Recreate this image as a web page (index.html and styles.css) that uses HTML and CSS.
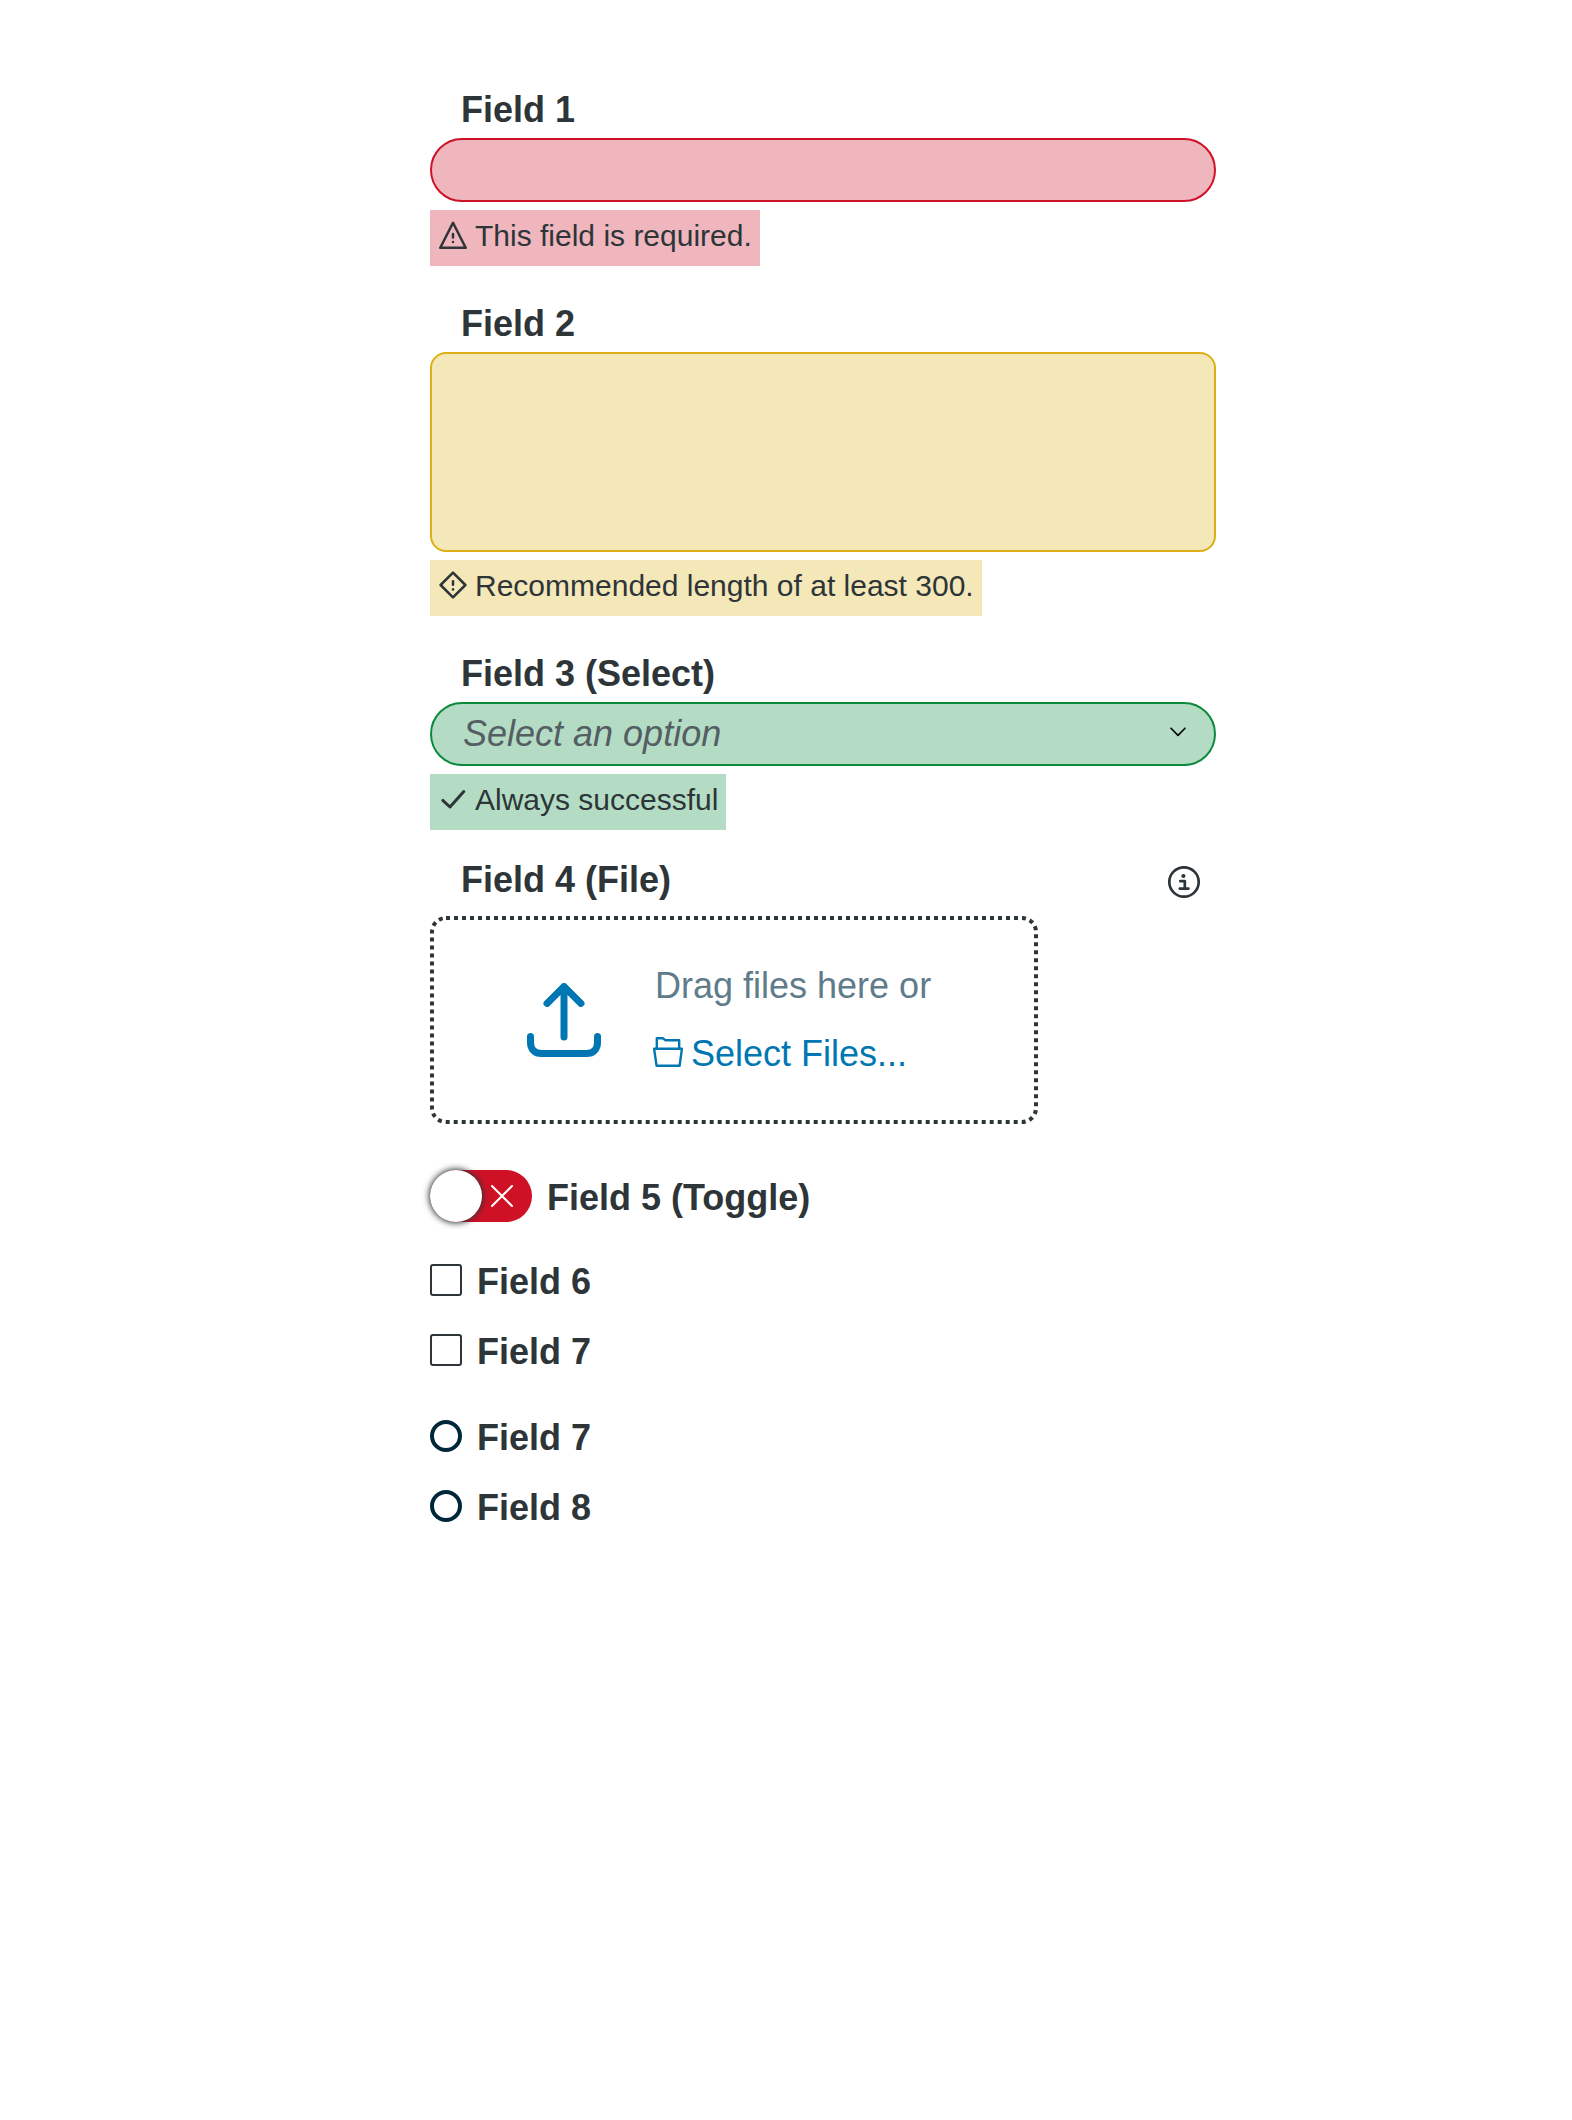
FILE: index.html
```html
<!DOCTYPE html>
<html lang="en">
<head>
<meta charset="utf-8">
<title>Form fields</title>
<link rel="stylesheet" href="styles.css">
</head>
<body>
<form class="form">
  <div class="field">
    <div class="label">Field 1</div>
    <div class="input error"></div>
    <div class="message error-bg">
      <svg class="message-icon" viewBox="0 0 28 28"><path d="M14 1.8 1.3 26.8H26.7Z"/><path d="M14 12.900v3.500M14 20.900v.2"/></svg>
      <span>This field is required.</span>
    </div>
  </div>
  <div class="field">
    <div class="label">Field 2</div>
    <div class="textarea"></div>
    <div class="message warning-bg">
      <svg class="message-icon" viewBox="0 0 28 28"><path d="M14 1.6 26.4 14 14 26.4 1.6 14Z"/><path d="M14 10.200v3.600M14 18.200v.2"/></svg>
      <span>Recommended length of at least 300.</span>
    </div>
  </div>
  <div class="field field-select">
    <div class="label">Field 3 (Select)</div>
    <div class="input success">
      <span class="placeholder">Select an option</span>
      <svg class="chevron" viewBox="0 0 16 10"><path d="M1 1.2 8 8.4 15 1.2"/></svg>
    </div>
    <div class="message success-bg">
      <svg class="message-icon" viewBox="0 0 28 28"><path class="tick" d="M3.8 15.4 11 22 24.800 6.5"/></svg>
      <span>Always successful</span>
    </div>
  </div>
  <div class="field field-file">
    <div class="label-row">
      <div class="label">Field 4 (File)</div>
      <svg class="info" viewBox="0 0 32 32"><circle cx="16" cy="16" r="14.7"/><path d="M12.3 15.2h4.5v7.6M11.8 22.7h8.600"/><circle class="dot" cx="15.4" cy="10" r="2.1"/></svg>
    </div>
    <div class="dropzone">
      <svg class="outline" viewBox="0 0 608 208"><rect x="2" y="2" width="604" height="204" rx="14"/></svg>
      <svg class="upload" viewBox="0 0 74 74"><path d="M37 54V3.6M20 20.4 37 3.6l17 16.8M3.5 53.5v6c0 7 4.5 11 11 11h45c6.500 0 11-4 11-11v-6"/></svg>
      <div class="drop-copy">
        <div class="drag-text">Drag files here or</div>
        <div class="browse">
          <svg class="folder" viewBox="0 0 30 30"><path d="M3.800 11V1.200H9.800L12.200 3.200H26.200V11"/><path d="M1.100 11.800H28.900L26.600 28.800H3.600Z"/></svg>
          <span>Select Files...</span>
        </div>
      </div>
    </div>
  </div>
  <div class="choice choice-toggle">
    <div class="toggle">
      <div class="thumb"></div>
      <svg class="cross" viewBox="0 0 22 22"><path d="M1 1 21 21M21 1 1 21"/></svg>
    </div>
    <span>Field 5 (Toggle)</span>
  </div>
  <div class="choices">
    <div class="choice"><div class="checkbox"></div><span>Field 6</span></div>
    <div class="choice"><div class="checkbox"></div><span>Field 7</span></div>
  </div>
  <div class="choices">
    <div class="choice"><div class="radio"></div><span>Field 7</span></div>
    <div class="choice"><div class="radio"></div><span>Field 8</span></div>
  </div>
</form>
</body>
</html>
```
FILE: styles.css
```css
* {
  box-sizing: border-box;
}

body {
  margin: 0;
  min-height: 2120px;
  background: #fff;
  color: #2d3538;
  font: 36px/48px "Liberation Sans", Arial, sans-serif;
}

svg {
  display: block;
  flex: none;
  fill: none;
  stroke-linecap: round;
  stroke-linejoin: round;
}

.form {
  width: 786px;
  margin-left: 430px;
  padding-top: 86px;
}

.field {
  display: flex;
  flex-direction: column;
  align-items: flex-start;
  margin-bottom: 34px;
}

.field-select {
  margin-bottom: 26px;
}

.label {
  padding-left: 31px;
  margin-bottom: 4px;
  font-weight: 700;
}

.input {
  display: flex;
  align-items: center;
  justify-content: space-between;
  width: 100%;
  height: 64px;
  padding: 0 28px 0 31px;
  border: 2px solid;
  border-radius: 32px;
}

.error {
  border-color: #cf1126;
  background: #f0b6bd;
}

.success {
  border-color: #0b8a3c;
  background: #b4dcc5;
}

.textarea {
  width: 100%;
  height: 200px;
  border: 2px solid #dbb016;
  border-radius: 16px;
  background: #f4e7b8;
}

.placeholder {
  color: #545e63;
  font-style: italic;
}

.chevron {
  width: 16px;
  height: 10px;
  margin-top: -4px;
  stroke: #000;
  stroke-width: 1.6;
}

.message {
  display: flex;
  gap: 8px;
  height: 56px;
  margin-top: 8px;
  padding: 6px 8px 0 9px;
  font-size: 30px;
  line-height: 40px;
}

.error-bg {
  background: #f0b6bd;
}

.warning-bg {
  background: #f4e7b8;
}

.success-bg {
  background: #b4dcc5;
}

.message-icon {
  width: 28px;
  height: 28px;
  margin-top: 5px;
  stroke: #2d3538;
  stroke-width: 2.5;
}

.tick {
  stroke-width: 3;
}

.label-row {
  display: flex;
  justify-content: space-between;
  width: 100%;
  padding-right: 16px;
}

.info {
  width: 32px;
  height: 32px;
  margin-top: 10px;
  stroke: #2d3538;
  stroke-width: 2.7;
}

.dot {
  fill: #2d3538;
  stroke: none;
}

.dropzone {
  position: relative;
  display: flex;
  gap: 52px;
  width: 608px;
  height: 208px;
  margin-top: 8px;
  padding: 46px 0 0 97px;
}

.outline {
  position: absolute;
  inset: 0;
  stroke: #2d3538;
  stroke-width: 4;
  stroke-linecap: butt;
  stroke-dasharray: 4 4;
}

.upload {
  width: 74px;
  height: 74px;
  margin-top: 21px;
  stroke: #0077b3;
  stroke-width: 7;
}

.drop-copy {
  display: flex;
  flex-direction: column;
  gap: 20px;
}

.drag-text {
  padding-left: 2px;
  color: #607c8a;
}

.browse {
  display: flex;
  gap: 8px;
  color: #0077b3;
}

.folder {
  width: 30px;
  height: 30px;
  margin-top: 7px;
  stroke: #0077b3;
  stroke-width: 2.4;
}

.choice {
  display: flex;
  align-items: flex-start;
  gap: 15px;
  height: 70px;
  font-weight: 700;
}

.choice-toggle {
  height: 88px;
  margin-top: 46px;
}

.choice-toggle > span {
  margin-top: 4px;
}

.toggle {
  display: flex;
  align-items: center;
  gap: 9px;
  width: 102px;
  height: 52px;
  border-radius: 26px;
  background: #cf1126;
}

.thumb {
  width: 52px;
  height: 52px;
  border-radius: 50%;
  background: #fff;
  box-shadow: 0 0 6px 1px #2d3538;
}

.cross {
  width: 22px;
  height: 22px;
  stroke: #fff;
  stroke-width: 2;
}

.choices {
  margin-bottom: 16px;
}

.checkbox {
  width: 32px;
  height: 32px;
  margin-top: 6px;
  border: 2px solid #2d3538;
  border-radius: 3px;
}

.radio {
  width: 32px;
  height: 32px;
  margin-top: 6px;
  border: 4px solid #00263a;
  border-radius: 50%;
}
```
